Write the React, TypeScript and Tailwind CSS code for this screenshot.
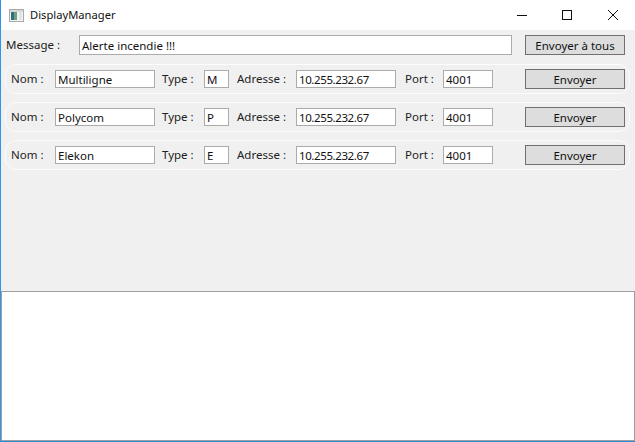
interface Display {
  name: string;
  type: string;
}

const displays: Display[] = [
  { name: "Multiligne", type: "M" },
  { name: "Polycom", type: "P" },
  { name: "Elekon", type: "E" },
];

const fieldClass = "h-[18px] border border-[#ababab] bg-white px-[2px] text-[11.5px] leading-[16px] text-[#111] outline-none";
const buttonClass = "h-[20px] w-[100px] border border-[#707070] bg-[#dddddd] pt-[1px] text-[11.5px] leading-[16px] text-[#111]";

const DisplayRow = ({ name, type }: Display) => (
  <div className="flex h-[30px] w-[625px] items-center rounded-[11px] border border-[#fcfcfc] text-[11.5px] text-[#222]">
    <span className="ml-[5px] w-[44px]">Nom :</span>
    <input readOnly value={name} className={`${fieldClass} w-[100px]`} />
    <span className="ml-[7px] w-[42px]">Type :</span>
    <input readOnly value={type} className={`${fieldClass} w-[25px]`} />
    <span className="ml-[8px] w-[59px]">Adresse :</span>
    <input readOnly value="10.255.232.67" className={`${fieldClass} w-[100px] tracking-[-0.4px]`} />
    <span className="ml-[9px] w-[38px]">Port :</span>
    <input readOnly value="4001" className={`${fieldClass} w-[50px]`} />
    <button className={`ml-[32px] ${buttonClass}`}>Envoyer</button>
  </div>
);

export default function App() {
  return (
    <div className="flex h-[442px] w-[635px] flex-col overflow-hidden border-b border-l border-b-[#2e8bd6] border-l-[#2b96ee] bg-white font-['Noto_Sans',sans-serif]">
      <div className="flex h-[30px] shrink-0 items-center">
        <svg width="15" height="13" viewBox="0 0 15 13" className="ml-[8px]">
          <rect x="0.5" y="0.5" width="14" height="12" fill="#f4f4f4" stroke="#a9a9a9" />
          <rect x="1" y="1" width="13" height="2" fill="#d8d8d8" />
          <rect x="2" y="3" width="3" height="8" fill="#2f6f80" />
          <rect x="5" y="3" width="3" height="8" fill="#6f9f7a" />
          <rect x="10" y="3" width="3" height="8" fill="#dfe5ea" />
        </svg>
        <span className="ml-[6px] text-[11.2px] text-[#111]">DisplayManager</span>
        <div className="ml-auto flex items-center">
          <svg width="10" height="10" viewBox="0 0 10 10" className="mr-[35px]">
            <path d="M0 5.5H10" stroke="#111" strokeWidth="1" fill="none" />
          </svg>
          <svg width="10" height="10" viewBox="0 0 10 10" className="mr-[36px]">
            <rect x="0.5" y="0.5" width="9" height="9" stroke="#111" strokeWidth="1" fill="none" />
          </svg>
          <svg width="10" height="10" viewBox="0 0 10 10" className="mr-[17px]">
            <path d="M0 0L10 10M10 0L0 10" stroke="#111" strokeWidth="1" fill="none" />
          </svg>
        </div>
      </div>
      <div className="flex h-[261px] shrink-0 flex-col bg-[#f0f0f0] pl-[4px]">
        <div className="mt-[5px] flex h-[20px] items-center text-[11.5px] text-[#222]">
          <span className="ml-[1px] w-[73px]">Message :</span>
          <input readOnly value="Alerte incendie !!!" className={`${fieldClass} h-[20px] w-[433px]`} />
          <button className={`ml-[13px] ${buttonClass}`}>Envoyer à tous</button>
        </div>
        <div className="mt-[9px] flex flex-col gap-[8px]">
          {displays.map((d) => (
            <DisplayRow key={d.name} {...d} />
          ))}
        </div>
      </div>
      <div className="min-h-0 flex-1 border border-[#a0a0a0] bg-white" />
    </div>
  );
}
